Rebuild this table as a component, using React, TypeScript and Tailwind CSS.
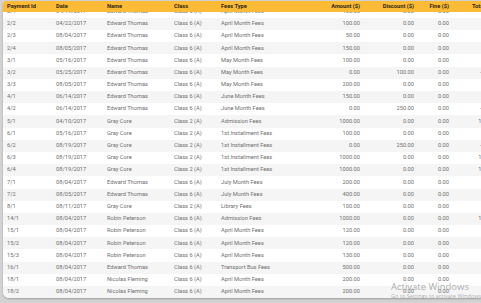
const rows = [
  ['2/1', '04/19/2017', 'Edward Thomas', 'Class 6 (A)', 'April Month Fees', '100.00', '0.00', '0.00'],
  ['2/2', '04/22/2017', 'Edward Thomas', 'Class 6 (A)', 'April Month Fees', '100.00', '0.00', '0.00'],
  ['2/3', '08/04/2017', 'Edward Thomas', 'Class 6 (A)', 'April Month Fees', '50.00', '0.00', '0.00'],
  ['2/4', '08/05/2017', 'Edward Thomas', 'Class 6 (A)', 'April Month Fees', '150.00', '0.00', '0.00'],
  ['3/1', '05/16/2017', 'Edward Thomas', 'Class 6 (A)', 'May Month Fees', '100.00', '0.00', '0.00'],
  ['3/2', '05/25/2017', 'Edward Thomas', 'Class 6 (A)', 'May Month Fees', '0.00', '100.00', '0.00'],
  ['3/3', '08/05/2017', 'Edward Thomas', 'Class 6 (A)', 'May Month Fees', '200.00', '0.00', '0.00'],
  ['4/1', '06/14/2017', 'Edward Thomas', 'Class 6 (A)', 'June Month Fees', '150.00', '0.00', '0.00'],
  ['4/2', '06/14/2017', 'Edward Thomas', 'Class 6 (A)', 'June Month Fees', '0.00', '250.00', '0.00'],
  ['5/1', '04/10/2017', 'Gray Core', 'Class 2 (A)', 'Admission Fees', '1000.00', '0.00', '0.00'],
  ['6/1', '05/16/2017', 'Gray Core', 'Class 2 (A)', '1st Installment Fees', '100.00', '0.00', '0.00'],
  ['6/2', '08/19/2017', 'Gray Core', 'Class 2 (A)', '1st Installment Fees', '0.00', '250.00', '0.00'],
  ['6/3', '08/19/2017', 'Gray Core', 'Class 2 (A)', '1st Installment Fees', '1000.00', '0.00', '0.00'],
  ['6/4', '08/19/2017', 'Gray Core', 'Class 2 (A)', '1st Installment Fees', '1000.00', '0.00', '0.00'],
  ['7/1', '08/04/2017', 'Edward Thomas', 'Class 6 (A)', 'July Month Fees', '200.00', '0.00', '0.00'],
  ['7/2', '08/05/2017', 'Edward Thomas', 'Class 6 (A)', 'July Month Fees', '400.00', '0.00', '0.00'],
  ['8/1', '08/11/2017', 'Gray Core', 'Class 2 (A)', 'Library Fees', '100.00', '0.00', '0.00'],
  ['14/1', '08/04/2017', 'Robin Peterson', 'Class 6 (A)', 'Admission Fees', '1000.00', '0.00', '0.00'],
  ['15/1', '08/04/2017', 'Robin Peterson', 'Class 6 (A)', 'April Month Fees', '120.00', '0.00', '0.00'],
  ['15/2', '08/04/2017', 'Robin Peterson', 'Class 6 (A)', 'April Month Fees', '120.00', '0.00', '0.00'],
  ['15/3', '08/04/2017', 'Robin Peterson', 'Class 6 (A)', 'April Month Fees', '130.00', '0.00', '0.00'],
  ['16/1', '08/04/2017', 'Edward Thomas', 'Class 6 (A)', 'Transport Bus Fees', '500.00', '0.00', '0.00'],
  ['18/1', '08/04/2017', 'Nicolas Fleming', 'Class 6 (A)', 'April Month Fees', '200.00', '0.00', '0.00'],
  ['18/2', '08/04/2017', 'Nicolas Fleming', 'Class 6 (A)', 'April Month Fees', '200.00', '0.00', '0.00'],
];

const total = (r: string[]) =>
  (parseFloat(r[5]) - parseFloat(r[6]) + parseFloat(r[7])).toFixed(2);

function Row({ cells, shade, head }: { cells: string[]; shade?: boolean; head?: boolean }) {
  return (
    <div
      className={
        head
          ? 'relative z-10 flex h-[11px] items-center bg-[#fbbb36] font-bold text-[#2e2512]'
          : `flex h-[12.2px] items-center text-[#6f6f6f] ${shade ? 'bg-[#f5f5f5]' : 'bg-white'}`
      }
    >
      <div className="w-[49px] shrink-0 pl-[4px]">{cells[0]}</div>
      <div className="w-[51px] shrink-0 pl-[4px]">{cells[1]}</div>
      <div className="w-[67px] shrink-0 pl-[4px]">{cells[2]}</div>
      <div className="w-[47px] shrink-0 pl-[4px]">{cells[3]}</div>
      <div className="w-[83px] shrink-0 pl-[4px]">{cells[4]}</div>
      <div className="w-[64px] shrink-0 pr-[4px] text-right">{cells[5]}</div>
      <div className="w-[54px] shrink-0 pr-[4px] text-right">{cells[6]}</div>
      <div className="w-[35px] shrink-0 pr-[4px] text-right">{cells[7]}</div>
      <div className={`w-[50px] shrink-0 pr-[4px] ${head ? 'pl-[19px] text-left' : 'text-right'}`}>{cells[8]}</div>
    </div>
  );
}

export default function App() {
  return (
    <div className="relative h-[303px] w-[481px] overflow-hidden bg-[#d3d3d3] pl-[3px] pt-[1px] pb-[5px] font-['Roboto','Liberation_Sans',sans-serif] text-[5.7px] leading-none">
      <div className="h-full overflow-hidden rounded-tl-[3px] rounded-bl-[6px] bg-white shadow-[0_1px_2px_rgba(0,0,0,0.25)]">
        <div className="w-[500px]">
          <Row
            head
            cells={['Payment Id', 'Date', 'Name', 'Class', 'Fees Type', 'Amount ($)', 'Discount ($)', 'Fine ($)', 'Total ($)']}
          />
          <div className="-mt-[6.3px]">
            {rows.map((r, i) => (
              <Row key={r[0]} cells={[...r, total(r)]} shade={i % 2 === 1} />
            ))}
          </div>
        </div>
      </div>

      {/* windows watermark */}
      <div className="pointer-events-none absolute left-[391px] top-[282px] whitespace-nowrap font-['Open_Sans','Liberation_Sans',sans-serif] text-[#9a9a9a]/80">
        <div className="text-[9.5px] leading-none">Activate Windows</div>
        <div className="mt-[2px] text-[5.6px] leading-none">Go to Settings to activate Windows.</div>
      </div>
    </div>
  );
}
